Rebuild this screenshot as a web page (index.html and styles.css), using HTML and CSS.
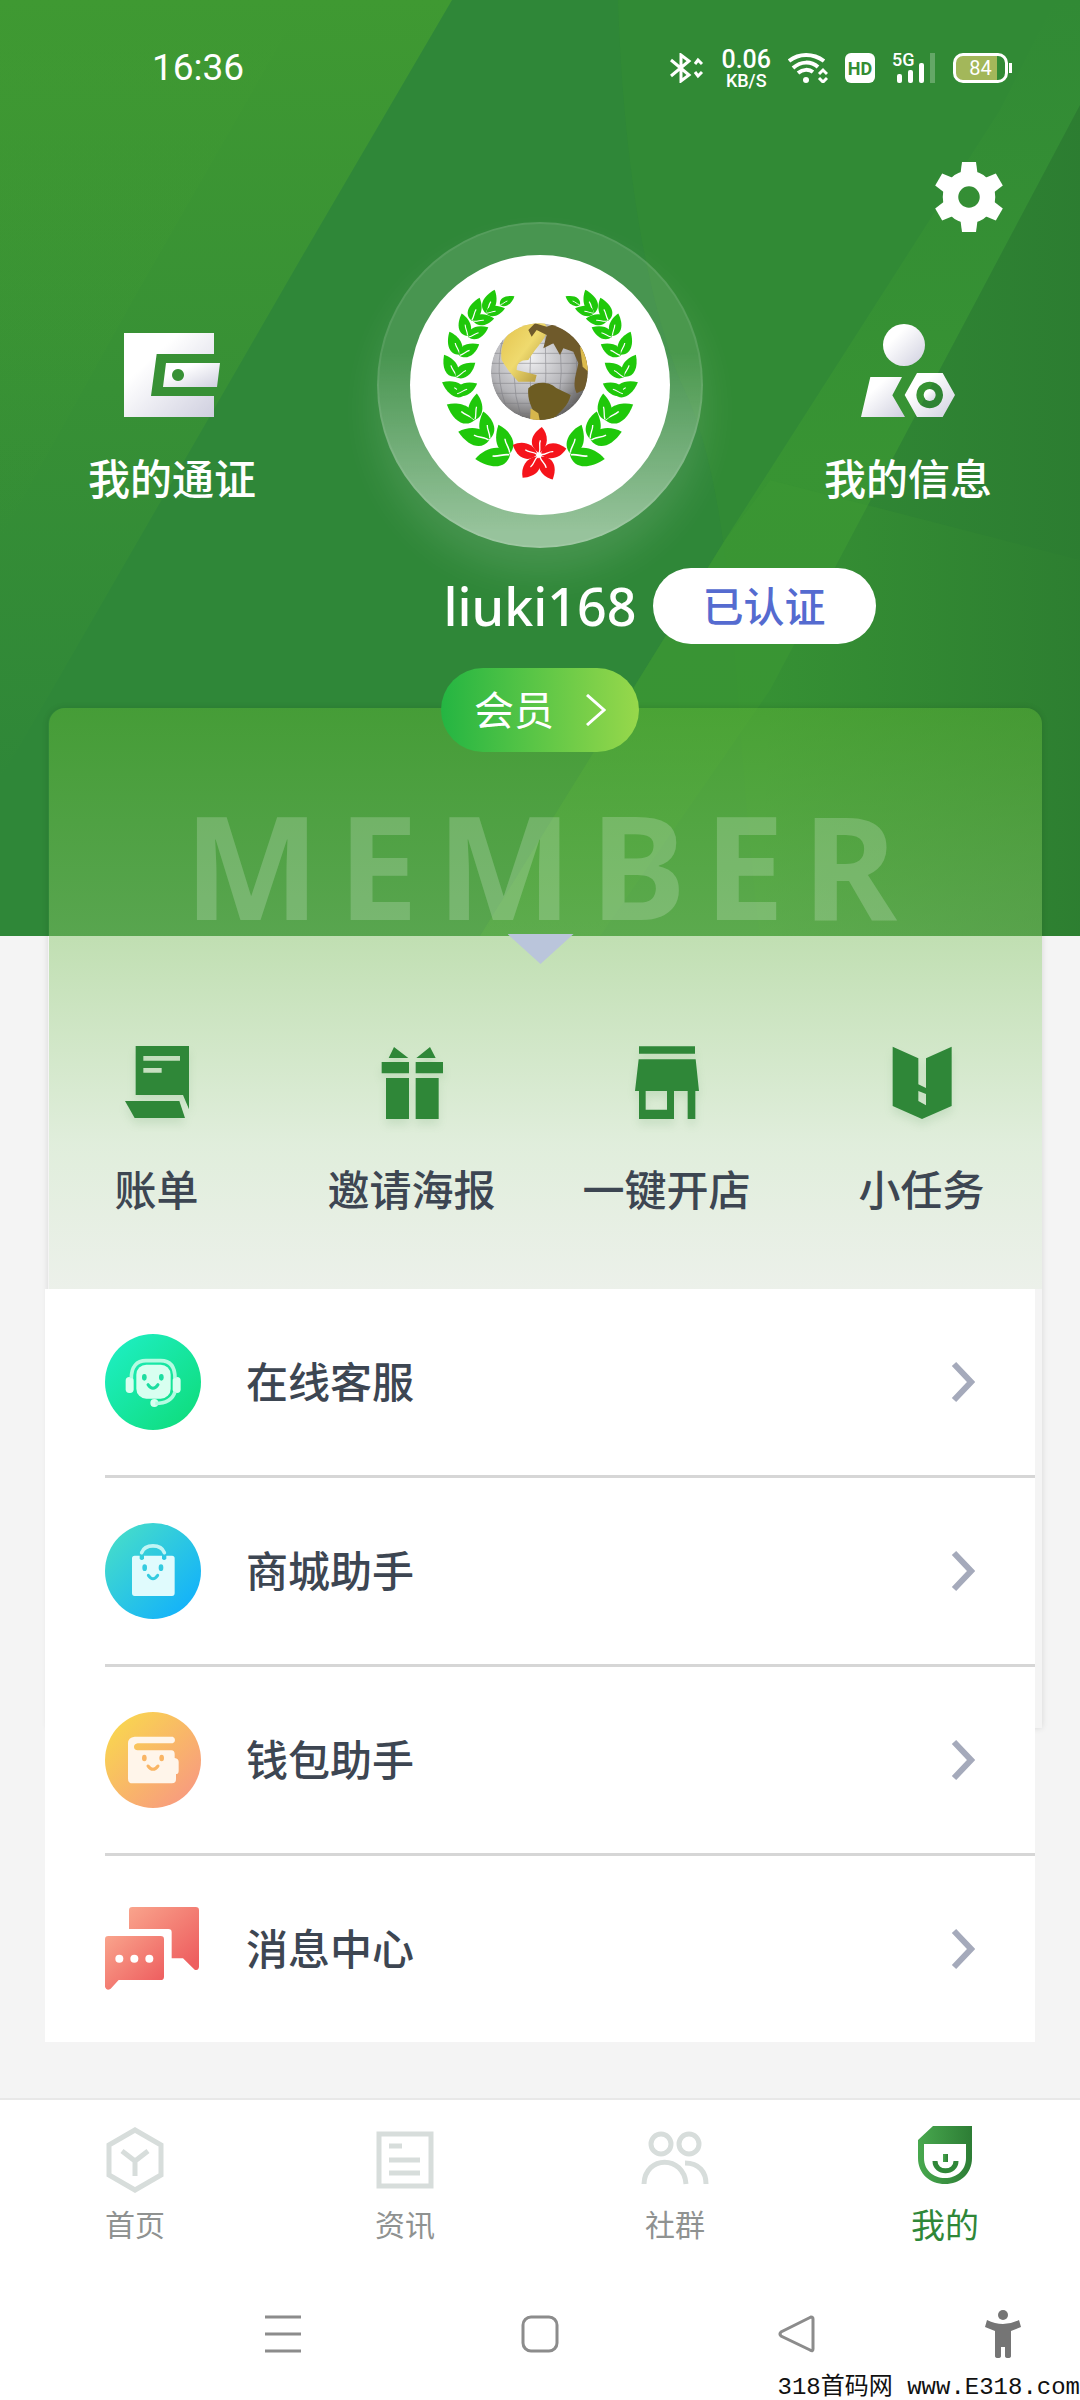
FILE: index.html
```html
<!DOCTYPE html>
<html lang="zh-CN">
<head>
    <meta charset="UTF-8">
    <meta name="viewport" content="width=device-width, initial-scale=1.0">
    <title>我的</title>
    <link rel="stylesheet" href="styles.css">
</head>
<body>
    <!-- shared gradients and shapes -->
    <svg class="defs" width="0" height="0" aria-hidden="true">
        <defs>
            <linearGradient id="silver" x1="0" y1="0" x2="1" y2="1">
                <stop offset="0.3" stop-color="#fff"/>
                <stop offset="1" stop-color="#cfcfdf"/>
            </linearGradient>
            <linearGradient id="mint" x1="0" y1="0" x2="1" y2="1">
                <stop offset="0" stop-color="#1ff0c8"/>
                <stop offset="1" stop-color="#0edb77"/>
            </linearGradient>
            <linearGradient id="blue" x1="0" y1="0" x2="1" y2="1">
                <stop offset="0.1" stop-color="#45dccb"/>
                <stop offset="0.9" stop-color="#12b1fb"/>
            </linearGradient>
            <linearGradient id="orange" x1="0" y1="0" x2="1" y2="1">
                <stop offset="0.1" stop-color="#f9d64f"/>
                <stop offset="0.9" stop-color="#f89a80"/>
            </linearGradient>
            <linearGradient id="coral" x1="0" y1="0" x2="1" y2="1">
                <stop offset="0" stop-color="#f9a48c"/>
                <stop offset="0.9" stop-color="#ee5f60"/>
            </linearGradient>
            <linearGradient id="leafgreen" x1="0" y1="0" x2="1" y2="0">
                <stop offset="0" stop-color="#48a84e"/>
                <stop offset="1" stop-color="#2d7d35"/>
            </linearGradient>
            <linearGradient id="bandLeft" x1="0" y1="0" x2="0" y2="1">
                <stop offset="0" stop-color="#3f9932"/>
                <stop offset="1" stop-color="#3f9932" stop-opacity="0"/>
            </linearGradient>
            <linearGradient id="bandRight" x1="0" y1="0" x2="0" y2="1">
                <stop offset="0" stop-color="#3b9832" stop-opacity="0"/>
                <stop offset="0.5" stop-color="#3b9832" stop-opacity="0.7"/>
                <stop offset="1" stop-color="#3b9832" stop-opacity="0.4"/>
            </linearGradient>
            <linearGradient id="shade" x1="0" y1="0" x2="1" y2="0">
                <stop offset="0" stop-color="#2b7a30" stop-opacity="0"/>
                <stop offset="1" stop-color="#2b7a30" stop-opacity="0.8"/>
            </linearGradient>
            <radialGradient id="globe" cx="0.4" cy="0.35" r="0.7">
                <stop offset="0" stop-color="#f1f1f3"/>
                <stop offset="0.6" stop-color="#b4b4b8"/>
                <stop offset="1" stop-color="#5c5a58"/>
            </radialGradient>
            <linearGradient id="gold" x1="0" y1="0" x2="1" y2="1">
                <stop offset="0" stop-color="#e3c24c"/>
                <stop offset="0.5" stop-color="#efda6e"/>
                <stop offset="1" stop-color="#a98d35"/>
            </linearGradient>
            <clipPath id="globeClip"><circle cx="538" cy="515" r="145"/></clipPath>
            <g id="leaf">
                <path d="M0 0C-32-12-31-48 0-84C24-58 31-16 0 0Z" fill="#1fc80a"/>
                <path d="M0-2C4-18-2-28 2-42" fill="none" stroke="#fff" stroke-width="4"/>
            </g>
            <g id="branch">
                <use href="#leaf" transform="translate(420 315) rotate(59) scale(.6)"/>
                <use href="#leaf" transform="translate(378 340) rotate(20) scale(.9)"/>
                <use href="#leaf" transform="translate(335 362) rotate(19) scale(.87)"/>
                <use href="#leaf" transform="translate(323 408) rotate(-15) scale(.83)"/>
                <use href="#leaf" transform="translate(300 464) rotate(-25) scale(.9)"/>
                <use href="#leaf" transform="translate(290 530) rotate(-30) scale(.9)"/>
                <use href="#leaf" transform="translate(318 582) rotate(-64) scale(.95)"/>
                <use href="#leaf" transform="translate(345 660) rotate(-61) scale(1.15)"/>
                <use href="#leaf" transform="translate(388 720) rotate(-75) scale(1.15)"/>
                <use href="#leaf" transform="translate(450 764) rotate(-97) scale(1.25)"/>
                <use href="#leaf" transform="translate(378 340) rotate(75) scale(.7)"/>
                <use href="#leaf" transform="translate(340 364) rotate(82) scale(.75)"/>
                <use href="#leaf" transform="translate(325 412) rotate(63) scale(.8)"/>
                <use href="#leaf" transform="translate(298 467) rotate(60) scale(.82)"/>
                <use href="#leaf" transform="translate(288 532) rotate(53) scale(.86)"/>
                <use href="#leaf" transform="translate(290 582) rotate(63) scale(.82)"/>
                <use href="#leaf" transform="translate(345 660) rotate(4) scale(.95)"/>
                <use href="#leaf" transform="translate(390 716) rotate(-14)"/>
                <use href="#leaf" transform="translate(450 760) rotate(-22) scale(1.1)"/>
            </g>
            <g id="petal">
                <path d="M-4-8C-34-28-28-60 4-84C26-62 28-28 4-8Z" fill="#f5141b"/>
                <path d="M0-6C6-20-4-30 2-44" fill="none" stroke="#fff" stroke-width="4"/>
            </g>
        </defs>
    </svg>

    <div class="hero-bg">
        <svg viewBox="0 0 1080 936" preserveAspectRatio="none" aria-hidden="true">
            <path d="M618 0H1080V936H760C730 700 740 500 680 380C640 280 622 130 618 0Z" fill="#348e31" opacity=".5"/>
            <path d="M0 0H452L300 260L0 780Z" fill="url(#bandLeft)"/>
            <path d="M0 0H305L133 300L0 540Z" fill="url(#bandLeft)" opacity=".5"/>
            <path d="M1055 0H1080V105L770 690L600 936H480L725 540L1000 110Z" fill="url(#bandRight)"/>
            <path d="M725 540L480 936H1080V560L770 480Z" fill="#3c9733" opacity=".5"/>
            <path d="M1080 105V936H760L770 690Z" fill="url(#shade)"/>
        </svg>
    </div>

    <header class="status-bar">
        <span class="time">16:36</span>
        <div class="status-icons">
            <svg width="34" height="30" viewBox="0 0 34 30" fill="none" stroke="#fff" stroke-width="3"><path d="M1 7L19 22L11 28V2L19 8L1 23"/><path d="M25 11L28 7L32 11M25 19L28 23L32 19"/></svg>
            <div class="speed"><b>0.06</b><small>KB/S</small></div>
            <svg width="40" height="30" viewBox="0 0 40 30" fill="none" stroke="#fff" stroke-width="4"><path d="M1 8C11 0 25 0 36 8M5 15C13 8 23 8 30 14M10 20C15 16 21 16 25 19"/><circle cx="18" cy="27" r="3" fill="#fff" stroke="none"/><path d="M31 21L35 17L39 21M31 25L35 29L39 25" stroke-width="3"/></svg>
            <span class="hd">HD</span>
            <div class="signal">
                <span>5G</span>
                <svg width="40" height="30" viewBox="0 0 40 30" fill="#fff"><rect x="1" y="21" width="5" height="9" rx="2"/><rect x="12" y="17" width="5" height="13" rx="2"/><rect x="23" y="10" width="5" height="20" rx="2"/><rect x="34" y="0" width="5" height="30" opacity=".25"/></svg>
            </div>
            <span class="battery">84</span>
        </div>
    </header>

    <div class="toolbar">
        <button class="settings" aria-label="设置">
            <svg width="72" height="72" viewBox="0 0 72 72" fill="#fff">
                <circle cx="36" cy="36" r="18.5" fill="none" stroke="#fff" stroke-width="15.5"/>
                <g id="teeth"><path id="tooth" d="M29 1H43L45 16H27Z"/><use href="#tooth" transform="rotate(60 36 36)"/><use href="#tooth" transform="rotate(120 36 36)"/></g>
                <use href="#teeth" transform="rotate(180 36 36)"/>
            </svg>
        </button>
    </div>

    <section class="profile">
        <a class="side-link" href="#">
            <svg width="96" height="84" viewBox="192 96 288 252" fill="url(#silver)">
                <path d="M192 96H462V159H290L273 285H462V348H192Z"/>
                <path fill-rule="evenodd" d="M318 186H480L471 258H309ZM354 204a18 18 0 1 0 .1 0Z"/>
            </svg>
            <span>我的通证</span>
        </a>
        <div class="avatar">
            <svg viewBox="150 165 780 780" role="img" aria-label="头像">
                <circle cx="540" cy="555" r="390" fill="#fff"/>
                <use href="#branch"/>
                <use href="#branch" transform="translate(1080 0) scale(-1 1)"/>
                <g clip-path="url(#globeClip)">
                    <circle cx="538" cy="515" r="145" fill="url(#globe)"/>
                    <g fill="none" stroke="#77777d" stroke-width="2.5" opacity=".6">
                        <path d="M390 430H690M390 460H690M390 490H690M390 520H690M390 550H690M390 580H690M390 610H690M390 640H690"/>
                        <path d="M440 380Q390 515 450 650M480 370Q440 515 485 660M520 370Q500 515 520 660M555 370Q560 515 555 660M590 370Q620 515 585 660M630 380Q675 515 620 650"/>
                    </g>
                    <path d="M425 480C415 420 460 360 540 360C570 375 565 400 545 425C530 445 520 455 505 480C480 480 470 490 470 510L530 525L525 545L475 545C450 520 440 505 425 480Z" fill="url(#gold)"/>
                    <path d="M505 390L525 370L560 380L590 370L640 390L665 440L690 460V560L650 580C635 550 650 520 655 490L640 455L610 445L600 465L580 430L550 445L560 405L530 390L515 410Z" fill="#6f5a2b"/>
                    <path d="M660 440L690 460V520L668 500Z" fill="#dcbb4c"/>
                    <path d="M505 565C530 540 570 545 590 565L632 585C625 620 595 640 570 665L530 665C525 630 500 610 505 565Z" fill="#6d5c22"/>
                    <path d="M512 625L535 640L540 665H510Z" fill="#d6b74c"/>
                </g>
                <g transform="translate(537 765)">
                    <use href="#petal" transform="rotate(3)"/>
                    <use href="#petal" transform="rotate(74)"/>
                    <use href="#petal" transform="rotate(148)"/>
                    <use href="#petal" transform="rotate(213)"/>
                    <use href="#petal" transform="rotate(288)"/>
                </g>
            </svg>
        </div>
        <a class="side-link" href="#">
            <svg width="94" height="93" viewBox="183 78 282 279" fill="url(#silver)">
                <circle cx="312" cy="141" r="63"/>
                <path d="M211 237H306L277 292L315 357H183Z"/>
                <path fill-rule="evenodd" d="M351 225H428L465 291L428 357H351L314 291ZM389 251a40 40 0 1 0 .1 0Z"/>
                <circle cx="389" cy="291" r="18"/>
            </svg>
            <span>我的信息</span>
        </a>
    </section>

    <div class="name-row">
        <h1>liuki168</h1>
        <span class="verified">已认证</span>
    </div>

    <button class="member-btn">
        会员
        <svg width="20" height="32" viewBox="0 0 20 32" fill="none" stroke="#fff" stroke-width="3"><path d="M1 1L18 16L1 31"/></svg>
    </button>

    <main class="panel">
        <section class="member-card">
            <div class="member-word">MEMBER</div>
            <div class="arrow"></div>
            <nav class="quick">
                <a href="#">
                    <svg viewBox="132 78 192 219"><path fill-rule="evenodd" d="M164 78H324V268L306 225H164ZM187 108V122H297V108ZM187 144V158H242V144Z"/><path d="M132 243H295L312 294H161Z"/></svg>
                    <span>账单</span>
                </a>
                <a href="#">
                    <svg viewBox="901 78 192 219"><path d="M943 81L986 114H927ZM1051 81L1010 114H1068ZM906 126H988V160H906ZM1008 126H1090V160H1008ZM919 174H988V297H919ZM1008 174H1077V297H1008Z"/></svg>
                    <span>邀请海报</span>
                </a>
                <a href="#">
                    <svg viewBox="285 78 192 219"><path fill-rule="evenodd" d="M297 79H465V101H297ZM296 118H467L477 213H466V297H443V213H402V297H297V213H285ZM317 213V269H381V213Z"/></svg>
                    <span>一键开店</span>
                </a>
                <a href="#">
                    <svg viewBox="1051 78 192 219"><path fill-rule="evenodd" d="M1059 80L1136 115V193L1159 204V115L1236 80V258L1147 297L1059 258ZM1136 213V243L1159 256V222Z"/></svg>
                    <span>小任务</span>
                </a>
            </nav>
        </section>

        <ul class="menu">
            <li><a href="#">
                <svg class="menu-icon" viewBox="45 72 288 288">
                    <circle cx="189" cy="216" r="144" fill="url(#mint)"/>
                    <g fill="#d8fff0">
                        <rect x="139" y="164" width="103" height="102" rx="30"/>
                        <rect x="107" y="201" width="24" height="48" rx="11"/>
                        <rect x="248" y="201" width="24" height="48" rx="11"/>
                        <circle cx="193" cy="279" r="12"/>
                    </g>
                    <path d="M124 205C124 170 140 152 168 152H212C242 152 255 172 255 205M255 245C248 268 228 280 196 280" fill="none" stroke="#b5fbe2" stroke-width="11"/>
                    <g fill="#1cdda0"><ellipse cx="163" cy="202" rx="7" ry="10"/><ellipse cx="214" cy="202" rx="7" ry="10"/></g>
                    <path d="M174 224Q189 246 204 224" fill="none" stroke="#1cdda0" stroke-width="9" stroke-linecap="round"/>
                </svg>
                <span>在线客服</span>
                <svg class="chevron" viewBox="0 0 24 42"><path d="M3 3L20 21L3 39"/></svg>
            </a></li>
            <li><a href="#">
                <svg class="menu-icon" viewBox="45 639 288 288">
                    <circle cx="189" cy="783" r="144" fill="url(#blue)"/>
                    <path d="M134 737H149V746Q155 754 162 746V737H216V746Q222 754 229 746V737H246Q254 737 254 745V849Q254 858 246 858H134Q126 858 126 849V745Q126 737 134 737Z" fill="#e0fbfd"/>
                    <path d="M155 728C165 701 213 701 223 728" fill="none" stroke="#c1f5f5" stroke-width="11" stroke-linecap="round"/>
                    <g fill="#34cbe0"><ellipse cx="164" cy="773" rx="7" ry="10"/><ellipse cx="213" cy="773" rx="7" ry="10"/></g>
                    <path d="M175 796Q189 816 203 796" fill="none" stroke="#34cbe0" stroke-width="9" stroke-linecap="round"/>
                </svg>
                <span>商城助手</span>
                <svg class="chevron" viewBox="0 0 24 42"><path d="M3 3L20 21L3 39"/></svg>
            </a></li>
            <li><a href="#">
                <svg class="menu-icon" viewBox="45 66 288 288">
                    <circle cx="189" cy="210" r="144" fill="url(#orange)"/>
                    <path d="M134 140H248Q255 142 255 150Q255 158 248 160H143Q132 162 132 171Q132 180 143 181H244Q254 182 254 192V204Q266 206 266 216V242Q266 252 258 252V268Q258 280 246 280H128Q114 280 114 266V160Q114 142 134 140Z" fill="#fff5ea"/>
                    <g fill="#f9b565"><ellipse cx="163" cy="204" rx="7" ry="10"/><ellipse cx="215" cy="204" rx="7" ry="10"/></g>
                    <path d="M174 228Q189 248 204 228" fill="none" stroke="#f9b565" stroke-width="9" stroke-linecap="round"/>
                </svg>
                <span>钱包助手</span>
                <svg class="chevron" viewBox="0 0 24 42"><path d="M3 3L20 21L3 39"/></svg>
            </a></li>
            <li><a href="#">
                <svg class="menu-icon" viewBox="45 630 288 288" fill="url(#coral)">
                    <path d="M127 648H317Q327 648 327 658V828Q325 840 314 836L279 802H245V724Q245 714 235 714H117V658Q117 648 127 648Z"/>
                    <path d="M55 735H212Q222 735 222 745V857Q222 867 212 867H86L62 893Q50 901 45 888V745Q45 735 55 735Z"/>
                    <g fill="#fff"><circle cx="88" cy="803" r="12"/><circle cx="133" cy="803" r="12"/><circle cx="178" cy="803" r="12"/></g>
                </svg>
                <span>消息中心</span>
                <svg class="chevron" viewBox="0 0 24 42"><path d="M3 3L20 21L3 39"/></svg>
            </a></li>
        </ul>
    </main>

    <footer class="bottom">
        <nav class="tabs">
            <a href="#">
                <svg viewBox="0 0 68 68" fill="none" stroke="#d7dddb" stroke-width="5"><path d="M34 4L60 19V49L34 64L8 49V19Z"/><path d="M21 25L34 35L47 25M34 35V50"/></svg>
                <span>首页</span>
            </a>
            <a href="#">
                <svg viewBox="0 0 68 68" fill="none" stroke="#d7dddb" stroke-width="5"><path d="M8 8H60V60H8Z"/><path d="M18 20H31M18 34H49M18 47H49"/></svg>
                <span>资讯</span>
            </a>
            <a href="#">
                <svg viewBox="0 0 68 68" fill="none" stroke="#d7dddb" stroke-width="5"><circle cx="20" cy="18" r="10"/><circle cx="48" cy="18" r="10"/><path d="M3 58C4 29 43 29 45 58M44 37C58 37 65 46 65 58"/></svg>
                <span>社群</span>
            </a>
            <a href="#" class="active">
                <svg viewBox="0 0 68 68" fill="url(#leafgreen)"><path fill-rule="evenodd" d="M22 0H61V32C61 48 49 58 34 58S7 48 7 32V14ZM13 18V32C13 44 22 52 34 52S55 44 55 32V18Z"/><path d="M24 35C24 48 45 48 45 35" fill="none" stroke="#2f8738" stroke-width="5"/><rect x="32" y="28" width="5" height="8"/></svg>
                <span>我的</span>
            </a>
        </nav>
        <div class="sys-nav">
            <button aria-label="最近任务"><svg viewBox="0 0 48 48"><path d="M6 7H42M6 24H42M6 41H42"/></svg></button>
            <button aria-label="主页"><svg viewBox="0 0 48 48"><rect x="7" y="7" width="34" height="34" rx="8"/></svg></button>
            <button aria-label="返回"><svg viewBox="0 0 48 48"><path d="M38 7Q40 7 40 9V39Q40 42 37 40L8 26Q6 24 8 22L36 8Z"/></svg></button>
            <button aria-label="无障碍"><svg viewBox="0 0 48 48"><g fill="#757575" stroke="none"><circle cx="24" cy="5" r="5"/><path d="M8 10L6 17L16 21V46Q16 48 19 48T22 46V37H26V46Q26 48 29 48T32 46V21L42 17L40 10Q24 18 8 10Z"/></g></svg></button>
        </div>
        <div class="watermark">318首码网 www.E318.com</div>
    </footer>
</body>
</html>
```
FILE: styles.css
```css
:root {
    --green: #2f8738;
    --text: #3d4652;
    --page: #f4f4f4;
}

* {
    box-sizing: border-box;
}

body {
    margin: 0;
    min-height: 100vh;
    display: flex;
    flex-direction: column;
    position: relative;
    font-family: "Noto Sans", "Noto Sans CJK SC", sans-serif;
    font-size: 42px;
    line-height: 56px;
    font-weight: 500;
    color: var(--text);
    background: var(--page);
}

a {
    color: inherit;
    text-decoration: none;
}

button {
    border: none;
    padding: 0;
    background: none;
    font: inherit;
    color: inherit;
    cursor: pointer;
}

svg {
    display: block;
}

.defs {
    position: absolute;
}

/* Green backdrop behind the profile and the top of the card */
.hero-bg {
    position: absolute;
    top: 0;
    left: 0;
    width: 100%;
    height: 936px;
    background: #2f8738;
    z-index: -1;
}

.hero-bg svg {
    width: 100%;
    height: 100%;
}

.status-bar {
    height: 136px;
    padding: 0 68px 0 152px;
    display: flex;
    align-items: center;
    justify-content: space-between;
    color: #fff;
}

.time {
    font-family: Roboto, sans-serif;
    font-size: 37px;
    font-weight: 400;
}

.status-icons {
    display: flex;
    align-items: center;
    gap: 17px;
    font-family: Roboto, sans-serif;
}

.speed {
    display: flex;
    flex-direction: column;
    align-items: center;
}

.speed b {
    font-size: 25px;
    line-height: 25px;
    font-weight: 500;
}

.speed small {
    font-size: 18px;
    line-height: 18px;
    font-weight: 500;
}

.hd {
    width: 30px;
    height: 30px;
    border-radius: 6px;
    background: #fff;
    color: #348c34;
    font-size: 18px;
    font-weight: 700;
    line-height: 31px;
    text-align: center;
}

.signal {
    position: relative;
    padding-left: 4px;
}

.signal span {
    position: absolute;
    top: -2px;
    left: 0;
    font-size: 18px;
    line-height: 18px;
}

.battery {
    position: relative;
    width: 55px;
    height: 30px;
    margin-right: 4px;
    border: 3px solid #fff;
    border-radius: 10px;
    background: linear-gradient(90deg, #a3b75a 84%, transparent 84%);
    font-size: 20px;
    font-weight: 400;
    line-height: 25px;
    text-align: center;
}

.battery::after {
    content: '';
    position: absolute;
    top: 7px;
    right: -7px;
    width: 3px;
    height: 10px;
    background: #fff;
}

.toolbar {
    height: 86px;
    padding: 25px 75px 0;
    display: flex;
    justify-content: flex-end;
    align-items: flex-start;
}

.profile {
    padding: 0 88px;
    display: flex;
    justify-content: space-between;
    align-items: flex-end;
    color: #fff;
}

.side-link {
    display: flex;
    flex-direction: column;
    align-items: center;
    gap: 34px;
    padding-bottom: 41px;
}

.avatar {
    width: 326px;
    height: 326px;
    padding: 31px;
    border: 2px solid rgba(255, 255, 255, 0.08);
    border-radius: 50%;
    background: linear-gradient(rgba(255, 255, 255, 0.12) 40%, rgba(255, 255, 255, 0.5) 95%) border-box;
    box-shadow: 0 24px 40px rgba(255, 255, 255, 0.12);
}

.name-row {
    margin-top: 20px;
    display: grid;
    grid-template-columns: 1fr auto 1fr;
    align-items: center;
    gap: 16px;
    color: #fff;
}

.name-row h1 {
    grid-column: 2;
    margin: 0;
    font-size: 52px;
    font-weight: 500;
}

.verified {
    justify-self: start;
    padding: 10px 50px;
    border-radius: 38px;
    background: #fff;
    color: #556bd0;
    font-size: 41px;
}

.member-btn {
    position: relative;
    z-index: 1;
    align-self: center;
    width: 198px;
    height: 84px;
    margin: 24px 0 -44px;
    display: flex;
    align-items: center;
    justify-content: center;
    gap: 32px;
    border-radius: 42px;
    background: linear-gradient(90deg, #24b542, #97d84b);
    color: #fff;
    font-size: 40px;
    font-weight: 400;
}

.panel {
    position: relative;
    padding: 0 45px;
}

/* soft edge of the sheet that runs behind the menu */
.panel::before {
    content: '';
    position: absolute;
    top: 0;
    left: 48px;
    right: 38px;
    height: 1020px;
    border-radius: 16px 16px 0 0;
    box-shadow: 0 0 6px rgba(0, 0, 0, 0.12);
    pointer-events: none;
}

.member-card {
    position: relative;
    margin: 0 -7px 0 4px;
    padding: 84px 0 71px;
    border-radius: 16px 16px 0 0;
    background: linear-gradient(rgba(92, 178, 54, 0.5), rgba(136, 200, 106, 0.47) 40%, rgba(200, 230, 190, 0.45) 75%, rgba(228, 237, 224, 0.5));
}

.member-word {
    font-size: 144px;
    line-height: 144px;
    font-weight: 700;
    letter-spacing: 18px;
    text-indent: 8px;
    text-align: center;
    color: rgba(255, 255, 255, 0.2);
}

.arrow {
    width: 66px;
    height: 30px;
    margin: -2px 0 82px calc(50% - 38px);
    background: #bac5db;
    clip-path: polygon(0 0, 100% 0, 50% 100%);
}

.quick {
    margin: 0 -7px 0 -20px;
    display: grid;
    grid-template-columns: repeat(4, 1fr);
}

.quick a {
    display: flex;
    flex-direction: column;
    align-items: center;
    gap: 43px;
}

.quick svg {
    width: 64px;
    height: 73px;
    fill: var(--green);
    filter: drop-shadow(0 6px 4px rgba(47, 135, 56, 0.12));
}

.menu {
    position: relative;
    list-style: none;
    margin: 0;
    padding: 0 0 0 60px;
    background: #fff;
}

.menu a {
    height: 186px;
    padding-right: 60px;
    display: flex;
    align-items: center;
    gap: 45px;
}

.menu li + li {
    border-top: 3px solid #d6d6d6;
}

.menu-icon {
    width: 96px;
    height: 96px;
}

.chevron {
    width: 24px;
    height: 42px;
    margin-left: auto;
    fill: none;
    stroke: #a5aabb;
    stroke-width: 6;
}

.bottom {
    position: relative;
    margin-top: auto;
    background: #fff;
    border-top: 2px solid #e8e8e8;
}

.tabs {
    padding-top: 26px;
    display: grid;
    grid-template-columns: repeat(4, 1fr);
    font-size: 30px;
    font-weight: 400;
    color: #8f9291;
}

.tabs a {
    display: flex;
    flex-direction: column;
    align-items: center;
    gap: 3px;
}

.tabs svg {
    width: 68px;
    height: 68px;
}

.tabs .active {
    color: var(--green);
    font-size: 34px;
}

.sys-nav {
    height: 147px;
    padding-top: 14px;
    display: grid;
    grid-template-columns: 3fr 5fr 5fr 5fr 3fr;
    align-items: center;
    justify-items: center;
}

.sys-nav button:first-child {
    grid-column: 2;
}

.sys-nav svg {
    width: 48px;
    height: 48px;
    fill: none;
    stroke: #8c8c8c;
    stroke-width: 3;
}

.watermark {
    position: absolute;
    right: 0;
    bottom: 0;
    font-family: "Liberation Mono", "Noto Sans CJK SC", monospace;
    font-size: 24px;
    line-height: 24px;
    font-weight: 400;
    color: #111;
}
```
